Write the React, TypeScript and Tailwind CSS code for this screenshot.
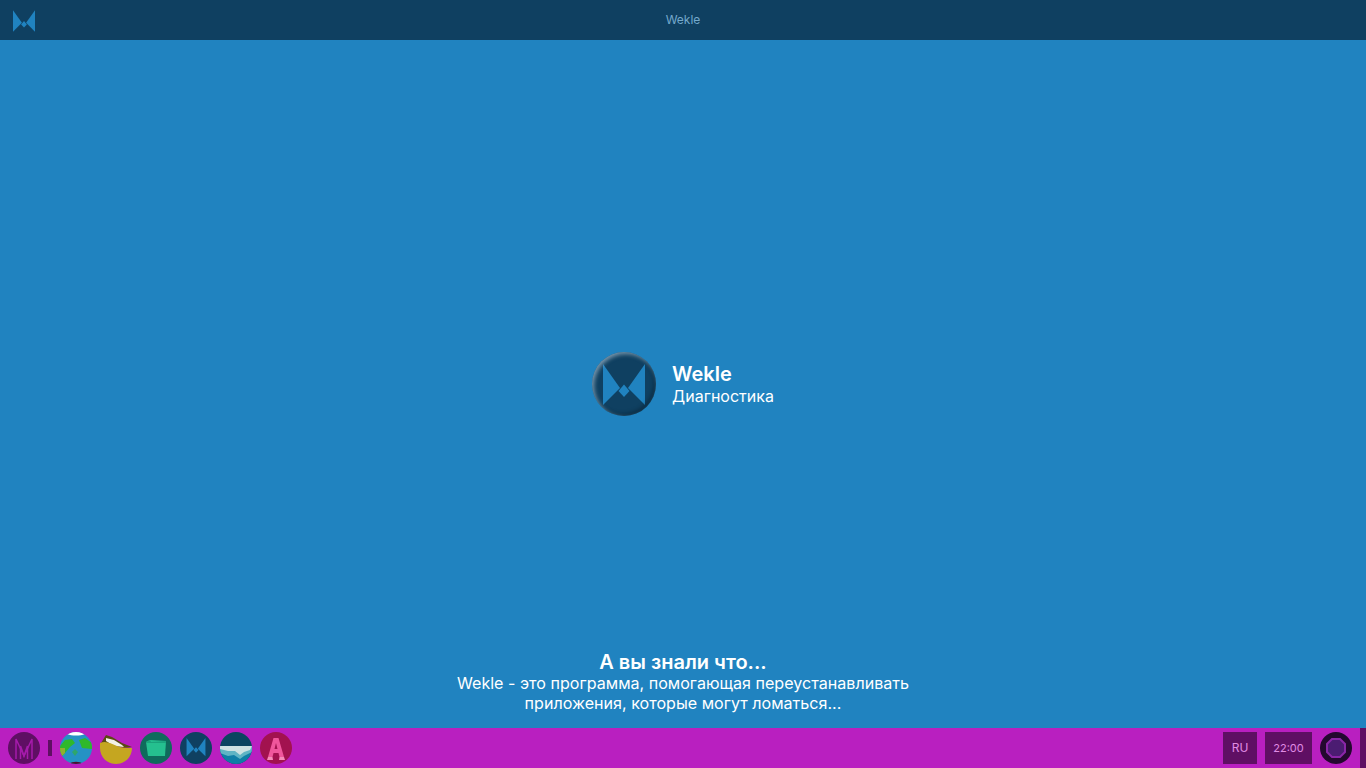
function MarkPaths() {
  return (
    <>
      <path d="M11 12 L28 36 L11 53 Z" fill="#2083c0" />
      <path d="M53 12 L36 36 L53 53 Z" fill="#2083c0" />
      <path d="M32 32.5 L37.5 39 L32 45 L26.5 39 Z" fill="#2083c0" />
    </>
  );
}

function DockLogo() {
  return (
    <svg viewBox="0 0 64 64" className="w-8 h-8">
      <circle cx="32" cy="32" r="32" fill="#0f4061" />
      <g transform="translate(3.2 1) scale(0.9)">
        <MarkPaths />
      </g>
    </svg>
  );
}

function GlobeIcon() {
  return (
    <svg viewBox="0 0 32 32" className="w-8 h-8">
      <clipPath id="globe">
        <circle cx="16" cy="16" r="16" />
      </clipPath>
      <g clipPath="url(#globe)">
        <rect width="32" height="32" fill="#2592c4" />
        <path d="M0 14 L5 8 L12 7 L15 11 L10 15 L5 21 L2 24 L0 20 Z" fill="#2fb82b" />
        <path d="M0 16 L5 16 L5 21 L2 24 L0 20 Z" fill="#8fb02f" />
        <path d="M19 8 L25 6 L32 11 L32 17 L22 16 Z" fill="#2fb82b" />
        <path d="M12 20 L15 17 L18 20 L15 24 Z" fill="#2ea66c" />
        <path d="M7 0 H25 V2 C20 4 12 4 7 2 Z" fill="#ffffff" />
        <path d="M9 32 C12 29 20 29 23 32 Z" fill="#4c1030" />
      </g>
    </svg>
  );
}

function FolderIcon() {
  return (
    <svg viewBox="0 0 32 32" className="w-8 h-8">
      <path d="M1 11 L6 3 L12 5 L22 11 L32 15 L24 16 Z" fill="#5b4a12" />
      <path d="M6 6 L14 8 L22 13 L24 15 L14 14 L6 9 Z" fill="#f3f1e6" />
      <path d="M0 11 C6 8 12 12 17 14 C22 16 27 16 32 16 C32 25 25 32 16 32 C7 32 0 25 0 16 Z" fill="#c5a620" />
    </svg>
  );
}

function BoxIcon() {
  return (
    <svg viewBox="0 0 32 32" className="w-8 h-8">
      <circle cx="16" cy="16" r="16" fill="#0f6b5c" />
      <path d="M6 10 L10 8 L26 9 L25 24 L8 24 Z" fill="#25c08f" />
      <path d="M6 10 L10 8 L11 10 L26 9 L26 11 L6 11 Z" fill="#1aa37c" />
    </svg>
  );
}

function DriveIcon() {
  return (
    <svg viewBox="0 0 32 32" className="w-8 h-8">
      <clipPath id="drive">
        <circle cx="16" cy="16" r="16" />
      </clipPath>
      <g clipPath="url(#drive)">
        <rect width="32" height="32" fill="#0b4560" />
        <path d="M0 14 H32 V32 H0 Z" fill="#0f7ea6" />
        <path d="M0 14 H32 V20 L24 24 L20 27 L14 23 L8 24 L0 21 Z" fill="#5fb4c4" />
        <path d="M0 14 H32 L30 18 L24 20 L20 23 L15 19 L8 19 L0 17 Z" fill="#cde2e2" />
      </g>
    </svg>
  );
}

function FontIcon() {
  return (
    <svg viewBox="0 0 32 32" className="w-8 h-8">
      <circle cx="16" cy="16" r="16" fill="#a2124f" />
      <path d="M13.5 6 H18.5 L24 25 H19.5 L18.5 21 H13.5 L12.5 25 H8 Z M14.5 17 H17.5 L16 11 Z" fillRule="evenodd" fill="#f0569c" />
      <path d="M8 25 H12.5 L13 28 H7 Z M19.5 25 H24 L25 28 H19 Z" fill="#f58ab8" />
    </svg>
  );
}

export default function App() {
  return (
    <div className="h-screen flex flex-col bg-[#2083c0] text-white overflow-hidden font-['Inter',sans-serif]">
      {/* Title bar */}
      <header className="relative h-10 shrink-0 bg-[#0f4061] flex items-center justify-center">
        <svg viewBox="11 12 42 41" className="absolute left-[13px] top-[10px] w-[22px] h-[22px]">
          <MarkPaths />
        </svg>
        <span className="text-xs text-[#74a9cc]">Wekle</span>
      </header>

      {/* Content */}
      <main className="flex-1 grid grid-rows-[1fr_auto_1fr]">
        <div />
        <div className="flex items-center justify-center gap-4">
          <div className="relative w-16 h-16 rounded-full bg-[#0f4061]">
            <svg viewBox="0 0 64 64" className="w-16 h-16">
              <MarkPaths />
            </svg>
            <div className="absolute inset-0 rounded-full shadow-[inset_2px_2px_4px_rgba(190,210,225,0.6),inset_-2px_-2px_4px_rgba(0,0,0,0.3)]" />
          </div>
          <div className="flex flex-col">
            <span className="text-xl leading-[25px] font-semibold">Wekle</span>
            <span className="text-base leading-[19px]">Диагностика</span>
          </div>
        </div>
        <div className="flex flex-col items-center justify-end pb-[15px] text-center">
          <h2 className="text-xl leading-[22px] font-semibold">А вы знали что...</h2>
          <p className="text-[16.1px] leading-5">
            Wekle - это программа, помогающая переустанавливать
            <br />
            приложения, которые могут ломаться...
          </p>
        </div>
      </main>

      {/* Taskbar */}
      <footer className="h-10 shrink-0 bg-[#b91fc0] flex items-center pl-2">
        <div className="w-8 h-8 rounded-full bg-[#5f0f63]">
          <svg viewBox="0 0 32 32" className="w-8 h-8" fill="none" stroke="#a51bab" strokeWidth="1.5">
            <path d="M8 27 V7 L16 24 L24 7 V27" />
            <path d="M12.5 27 V14 L16 24 L19.5 14 V27" />
          </svg>
        </div>
        <div className="w-1 h-4 bg-[#5f0f63] mx-2" />
        <div className="flex gap-2">
          <GlobeIcon />
          <FolderIcon />
          <BoxIcon />
          <DockLogo />
          <DriveIcon />
          <FontIcon />
        </div>
        <div className="ml-auto flex items-center h-full">
          <div className="w-[34px] h-8 bg-[#5f0f63] text-[#e08ce3] text-xs flex items-center justify-center">RU</div>
          <div className="w-[47px] h-8 ml-2 bg-[#5f0f63] text-[#e08ce3] text-[11px] flex items-center justify-center">22:00</div>
          <div className="w-8 h-8 ml-2 rounded-full bg-[#24082f] flex items-center justify-center">
            <svg viewBox="0 0 20 20" className="w-5 h-5">
              <path d="M6 1 H14 L19 6 V14 L14 19 H6 L1 14 V6 Z" fill="#4b1c72" stroke="#8a26a8" strokeWidth="2" />
            </svg>
          </div>
          <div className="w-1.5 h-full ml-2 bg-[#5f0f63]" />
        </div>
      </footer>
    </div>
  );
}
